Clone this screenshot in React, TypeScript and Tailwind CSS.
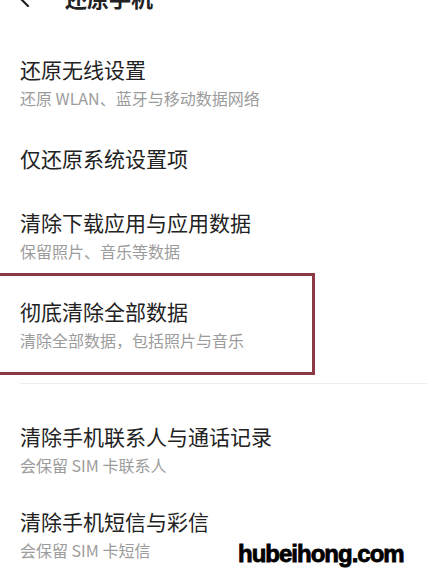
import React from "react";

function Item({
  title,
  sub,
  pad,
}: {
  title: string;
  sub?: string;
  pad: "a" | "b";
}) {
  return (
    <div className={pad === "a" ? "px-5 py-[18px]" : "px-5 py-4"}>
      <div className="text-[21px] leading-[28px] text-[#222222]">{title}</div>
      {sub && (
        <div className="mt-[5px] text-[16px] leading-[20px] text-[#9c9c9c]">
          {sub}
        </div>
      )}
    </div>
  );
}

export default function App() {
  return (
    <div className="relative w-[427px] h-[576px] overflow-hidden bg-white font-['Noto_Sans_CJK_SC','Noto_Sans',sans-serif]">
      {/* header (cut off at top) */}
      <div className="-mt-[23px] h-[40px] flex items-center pl-[17px]">
        <svg width="13" height="20" viewBox="0 0 13 20" className="shrink-0">
          <path
            d="M11 1 L2 10 L11 19"
            fill="none"
            stroke="#222"
            strokeWidth="2.2"
            strokeLinecap="round"
            strokeLinejoin="round"
          />
        </svg>
        <div className="ml-[35px] text-[22px] leading-[28px] font-bold text-[#222222]">
          还原手机
        </div>
      </div>

      <div className="mt-[20px]">
        <Item pad="a" title="还原无线设置" sub="还原 WLAN、蓝牙与移动数据网络" />
        <Item pad="a" title="仅还原系统设置项" />
        <Item pad="a" title="清除下载应用与应用数据" sub="保留照片、音乐等数据" />
        <div className="relative">
          <Item pad="a" title="彻底清除全部数据" sub="清除全部数据，包括照片与音乐" />
          <div className="absolute -top-[6px] -bottom-[7px] -left-[4px] w-[319px] border-[3px] border-[#8b3a45]" />
        </div>
      </div>

      <div className="mt-[15px] ml-5 h-px bg-[#ececec]" />

      <div className="mt-[22px]">
        <Item pad="b" title="清除手机联系人与通话记录" sub="会保留 SIM 卡联系人" />
        <Item pad="b" title="清除手机短信与彩信" sub="会保留 SIM 卡短信" />
      </div>

      <div className="absolute left-[238px] top-[542px] text-[24px] leading-[24px] font-bold tracking-[-1px] text-black [-webkit-text-stroke:0.8px_black] font-['Liberation_Sans',sans-serif]">
        hubeihong.com
      </div>
    </div>
  );
}
